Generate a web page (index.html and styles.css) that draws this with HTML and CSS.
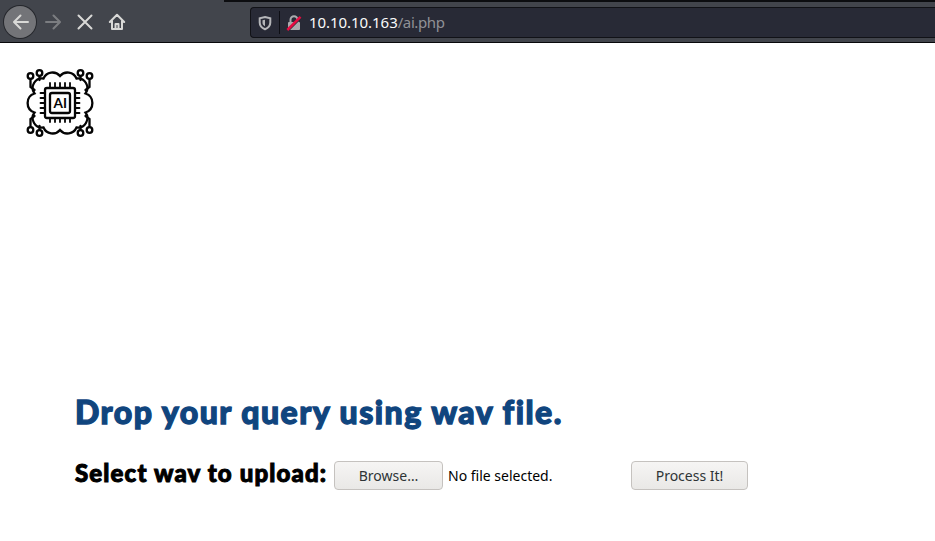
FILE: index.html
```html
<!DOCTYPE html>
<html lang="en">
<head>
<meta charset="utf-8">
<title>ai.php</title>
<link rel="stylesheet" href="styles.css">
</head>
<body>
<header class="toolbar">
  <nav class="nav">
    <span class="nav-btn back"><svg width="18" height="18" viewBox="0 0 18 18"><path d="M16 9H2.500M8.500 2.500 2 9l6.500 6.500"/></svg></span>
    <span class="nav-btn forward"><svg width="18" height="18" viewBox="0 0 18 18"><path d="M2 9h13.500M9.500 2.500 16 9l-6.500 6.500"/></svg></span>
    <span class="nav-btn"><svg width="18" height="18" viewBox="0 0 18 18"><path d="m2.500 2.500 13 13m0-13-13 13"/></svg></span>
    <span class="nav-btn"><svg width="18" height="18" viewBox="0 0 18 18"><path d="m1.800 9 7.200-7.200L16.200 9M4 8v8h10V8"/><path d="M7.500 16v-5h3v5"/></svg></span>
  </nav>
  <div class="url-bar">
    <svg class="shield" width="14" height="16" viewBox="0 0 14 16"><path d="M7 2 12.300 3.200V7.500c0 3.300-2.300 5.500-5.300 6.700C4 13 1.700 10.800 1.700 7.500V3.200z" fill="none" stroke="#b5b6b9" stroke-width="2"/><path d="M7 4.800v6.400C5.400 10.400 4.500 9.300 4.500 8V5.300z" fill="#b5b6b9"/></svg>
    <i class="divider"></i>
    <svg class="lock" width="16" height="16" viewBox="0 0 16 16"><path d="M4.500 7V4.800a3.500 3.500 0 0 1 7 0V7" fill="none" stroke="#aaabae" stroke-width="2"/><rect x="2" y="7" width="12" height="8" rx="1" fill="#aaabae"/><path d="M2 16 15 3" stroke="#282a36" stroke-width="1.500"/><path d="M1.300 15 14.500 1.800" stroke="#e60c42" stroke-width="2.500"/></svg>
    <span class="url"><b>10.10.10.163</b>/ai.php</span>
  </div>
</header>
<main>
  <svg class="logo" viewBox="0 0 84 84" fill="none" stroke="#050505" stroke-width="2.300" stroke-linecap="round">
    <path d="M42 16A9.800 9.800 0 0 1 58.500 18.500A9.500 9.500 0 0 1 67.500 33.500A10 10 0 0 1 67.500 52.500A9.500 9.500 0 0 1 58.500 67.500A9.800 9.800 0 0 1 42 70A9.800 9.800 0 0 1 25.500 67.500A9.500 9.500 0 0 1 16.500 52.500A10 10 0 0 1 16.500 33.500A9.500 9.500 0 0 1 25.500 18.500A9.800 9.800 0 0 1 42 16Z"/>
    <path d="M12.500 19v8l4 3M21.500 16v4M71.500 19v8l-4 3M62.500 16v4M12.500 67v-8l4-3M21.500 70v-4M71.500 67v-8l-4-3M62.500 70v-4"/>
    <g fill="#fff"><circle cx="12.500" cy="16" r="2.800"/><circle cx="21.500" cy="13" r="2.800"/><circle cx="71.500" cy="16" r="2.800"/><circle cx="62.500" cy="13" r="2.800"/><circle cx="12.500" cy="70" r="2.800"/><circle cx="21.500" cy="73" r="2.800"/><circle cx="71.500" cy="70" r="2.800"/><circle cx="62.500" cy="73" r="2.800"/></g>
    <path stroke-width="1.800" d="M32 23v39M37 23v39M42 23v39M47 23v39M52 23v39M22.500 33h39M22.500 38h39M22.500 43h39M22.500 48h39M22.500 53h39"/>
    <rect x="27" y="28" width="30" height="30" rx="2" fill="#fff"/>
    <rect x="32" y="33" width="20" height="20" rx="2"/>
    <text class="chip-text" x="42.200" y="47.500" text-anchor="middle" textLength="13.500" lengthAdjust="spacingAndGlyphs">AI</text>
  </svg>
  <section class="content">
    <h1>Drop your query using wav file.</h1>
    <form class="upload">
      <h2>Select wav to upload:</h2>
      <button type="button" class="browse">Browse…</button>
      <span class="status">No file selected.</span>
      <button type="button" class="process">Process It!</button>
    </form>
  </section>
</main>
</body>
</html>
```
FILE: styles.css
```css
* { box-sizing: border-box; }
body { margin: 0; height: 541px; overflow: hidden; background: #fff; font-family: "Noto Sans", sans-serif; }
.toolbar { height: 43px; display: flex; background: linear-gradient(#0c0d10, #0c0d10) 224px 0 / 100% 2px no-repeat, #42454c; border-bottom: 1px solid #08080b; }
.nav { display: flex; width: 250px; padding: 6px 0 0 4px; }
.nav-btn { width: 32px; height: 32px; padding-left: 1px; display: flex; align-items: center; justify-content: center; }
.nav-btn svg { fill: none; stroke: #d9d9d7; stroke-width: 2; stroke-linecap: round; stroke-linejoin: round; }
.back { background: #737478; border-radius: 50%; box-shadow: 0 0 0 1px #25272c; }
.forward { opacity: .38; }
.url-bar { flex: 1; height: 31px; margin-top: 7px; display: flex; align-items: center; background: #282a36; border: 1px solid #111217; border-right: 0; border-radius: 4px 0 0 4px; }
.shield { margin-left: 7px; }
.divider { width: 1px; height: 23px; margin-left: 7px; background: #0d0e14; }
.lock { margin-left: 6px; }
.url { margin-left: 7px; font: 15px/29px "Noto Sans", sans-serif; color: #909196; white-space: nowrap; letter-spacing: -.4px; }
.url b { font-weight: 400; color: #fafafa; letter-spacing: -.05px; }
.logo { display: block; width: 84px; height: 84px; margin: 17px 0 0 18px; }
.chip-text { font: 700 13px Lato, sans-serif; fill: #050505; stroke: none; }
.content { margin: 246px 0 0 75px; }
h1, h2 { margin: 0; font-family: Lato, sans-serif; font-weight: 900; white-space: nowrap; }
h1 { font-size: 32px; line-height: 44px; color: #10457e; letter-spacing: 1.48px; -webkit-text-stroke: 1.3px #10457e; }
h2 { width: 259px; font-size: 24px; line-height: 34px; color: #000; letter-spacing: 1.15px; -webkit-text-stroke: 1px #000; }
.upload { display: flex; align-items: center; margin-top: 22px; }
button { position: relative; top: 2px; height: 29px; padding: 0; border: 1px solid #c5c2bf; border-radius: 4px; background: linear-gradient(#f6f5f4, #e9e8e6); color: #2e3436; font: 14px/27px "Noto Sans", sans-serif; }
.browse { width: 109px; }
.status { width: 183px; margin-left: 5px; padding-top: 4px; font-size: 14px; color: #000; white-space: nowrap; }
.process { width: 117px; }
```
